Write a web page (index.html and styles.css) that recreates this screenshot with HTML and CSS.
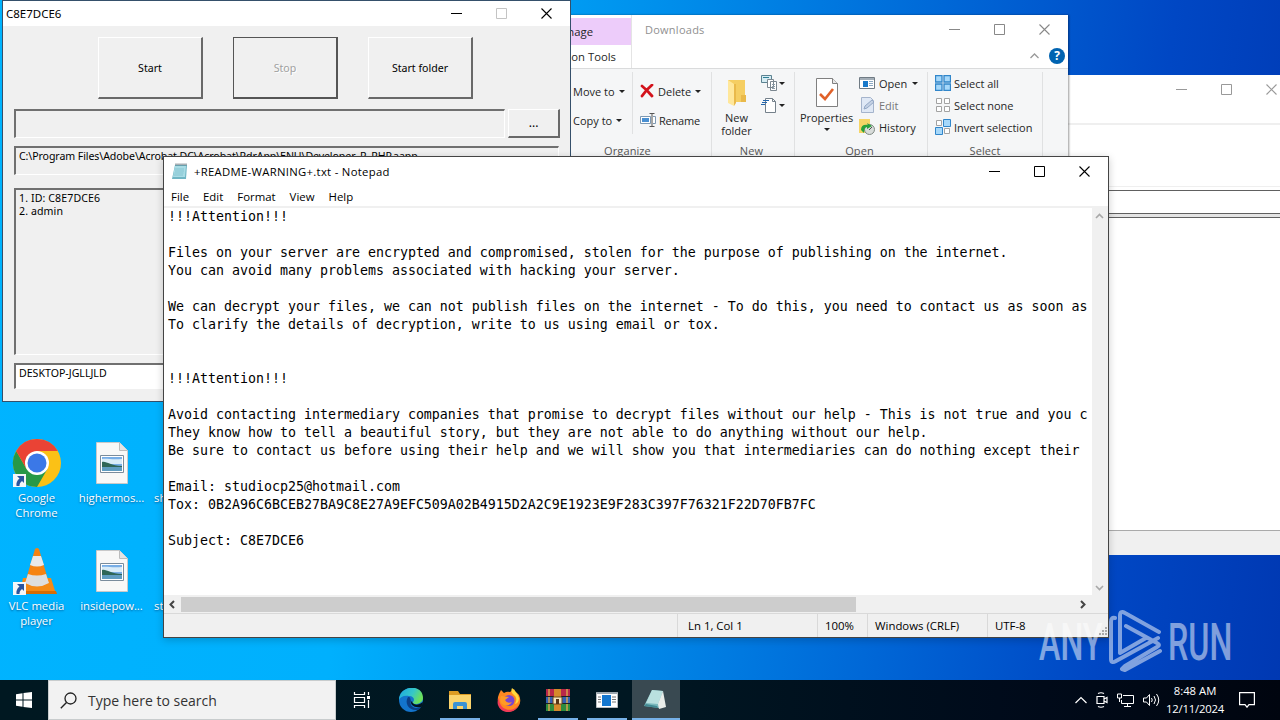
FILE: index.html
```
<!DOCTYPE html>
<html lang="en">
<head>
    <meta charset="UTF-8">
    <title>Desktop</title>
    <link rel="stylesheet" href="styles.css">
</head>
<body>
<svg class="defs" width="0" height="0">
    <symbol id="min" viewBox="0 0 11 11"><path d="M0 5.5h11" stroke="currentColor"/></symbol>
    <symbol id="max" viewBox="0 0 11 11"><path d="M.5.5h10v10H.5z" fill="none" stroke="currentColor"/></symbol>
    <symbol id="close" viewBox="0 0 11 11"><path d="M.5.5l10 10M10.500.5l-10 10" fill="none" stroke="currentColor" stroke-width="1.1"/></symbol>
    <symbol id="shortcut" viewBox="0 0 13 13"><path d="M0 0h13v13H0z" fill="#f4f6f8"/><path d="M4 2h7v7L9 7C7 8.500 6.500 10 6.500 12H3.500C3 9 4 6.500 6.500 4.500z" fill="#2b559e"/></symbol>
    <symbol id="picture" viewBox="0 0 32 42"><path d="M.5.5h23l8 8v33H.5z" fill="#f8f8f7" stroke="#c9c9c9"/><path d="M23.500.5v8h8" fill="#e4e4e4" stroke="#bcbcbc"/><path d="M4.500 13.500h23v17h-23z" fill="#fff" stroke="#7a8c9c"/><path d="M6 15h20v14H6z" fill="#78aee6"/><path d="M6 17c5-1 9 1 20 0v5H6z" fill="#d9ecf8"/><path d="M6 20c5-1 8 4 20 4v2H6z" fill="#2f6657"/><path d="M6 25h20v4H6z" fill="#5f9cc0"/></symbol>
</svg>

<div class="desktop">
    <!-- desktop icons -->
    <div class="icons">
        <div class="icon">
            <svg width="52" height="52" viewBox="0 0 52 52">
                <circle cx="26" cy="26" r="24" fill="#fbc116"/>
                <path d="M5.200 14A24 24 0 0 1 46.800 14H26z" fill="#ea4335"/>
                <path d="M5.200 14A24 24 0 0 0 26 50L36.400 32 26 38 15.600 32z" fill="#279847"/>
                <path d="M5.200 14L15.600 32 19 20 26 14z" fill="#ea4335"/>
                <circle cx="26" cy="26" r="12" fill="#fff"/><circle cx="26" cy="26" r="9.500" fill="#3b78e7"/>
                <use href="#shortcut" x="2" y="37" width="13" height="13"/>
            </svg>
            <span>Google<br>Chrome</span>
        </div>
        <div class="icon">
            <svg width="52" height="52" viewBox="0 0 52 52"><use href="#picture" x="10" y="5" width="32" height="42"/></svg>
            <span>highermos...</span>
        </div>
        <div class="icon cut"><span>sh</span></div>
        <div class="icon">
            <svg width="52" height="52" viewBox="0 0 52 52">
                <path d="M12 33h28l5 16H9z" fill="#f58a16"/><path d="M9 46h36l1 3H8z" fill="#d66c04"/>
                <path d="M24 4q2-2 4 0l10 34q-12 8-24 0z" fill="#f58312"/>
                <path d="M22 11h8l3 9q-7 3-14 0z" fill="#e9e9e9"/><path d="M17 29q9 3 18 0l3 9q-12 7-24 0z" fill="#dedede"/>
                <use href="#shortcut" x="2" y="37" width="13" height="13"/>
            </svg>
            <span>VLC media<br>player</span>
        </div>
        <div class="icon">
            <svg width="52" height="52" viewBox="0 0 52 52"><use href="#picture" x="10" y="5" width="32" height="42"/></svg>
            <span>insidepow...</span>
        </div>
        <div class="icon cut"><span>st</span></div>
    </div>

    <!-- empty window at the back -->
    <div class="window back">
        <div class="buttons"><svg><use href="#min"/></svg><svg><use href="#max"/></svg><svg><use href="#close"/></svg></div>
        <div class="back-tools"></div>
        <div class="back-field"></div>
        <div class="back-gap"></div>
        <div class="back-list"></div>
        <div class="back-status"></div>
    </div>

    <!-- file explorer -->
    <div class="window explorer">
        <div class="explorer-top">
            <div class="tabs">
                <div class="tab manage">Manage</div>
                <div class="tab tools">Application Tools</div>
            </div>
            <div class="explorer-title">Downloads</div>
            <div class="explorer-right">
                <div class="buttons"><svg><use href="#min"/></svg><svg><use href="#max"/></svg><svg><use href="#close"/></svg></div>
                <div class="help">
                    <svg width="9" height="6" viewBox="0 0 9 6"><path d="M.5 5l4-4 4 4" fill="none" stroke="#999" stroke-width="1.300"/></svg>
                    <b>?</b>
                </div>
            </div>
        </div>
        <div class="ribbon">
            <div class="group organize">
                <div class="group-body">
                    <div class="col move">
                        <div class="cmd"><span>Move to</span><i class="arrow"></i></div>
                        <div class="cmd"><span>Copy to</span><i class="arrow"></i></div>
                    </div>
                    <div class="col del">
                        <div class="cmd">
                            <svg width="14" height="14" viewBox="0 0 14 14"><path d="M2 2q5 4 10 10M12 1Q6 6 2 12" fill="none" stroke="#d3131c" stroke-width="2.800" stroke-linecap="round"/></svg>
                            <span>Delete</span><i class="arrow"></i>
                        </div>
                        <div class="cmd rename">
                            <svg width="16" height="16" viewBox="0 0 16 16"><path d="M.5 4.500h10v7H.5zM13 4.500h2.500v7H13" fill="#fff" stroke="#7d99b3"/><path d="M2 6h7v4H2z" fill="#4a90d2"/><path d="M9.500 1.500h5M12 2v12M9.500 14.500h5" stroke="#555" fill="none"/></svg>
                            <span>Rename</span>
                        </div>
                    </div>
                </div>
                <div class="group-name">Organize</div>
            </div>
            <div class="group new">
                <div class="group-body">
                    <div class="big">
                        <svg width="20" height="28" viewBox="0 0 20 28"><path d="M1 1h17v22H1z" fill="#f5ce62"/><path d="M1 1l6 4v22l-6-3z" fill="#ffe79a"/><path d="M7 5h2v19l-2 3zM14 16h5v7h-5z" fill="#e9b94a"/></svg>
                        <span>New<br>folder</span>
                    </div>
                    <div class="small">
                        <div><svg width="17" height="16" viewBox="0 0 17 16"><path d="M.5.5h10v7H.5z" fill="#d6ecf3" stroke="#5b8291"/><path d="M2 2.500h6" stroke="#2e7f94"/><path d="M6.500 4.500h6v8h-6zM9.500 6.500h6v9h-6z" fill="#fff" stroke="#7b8790"/><path d="M11 9.500h3M11 11.500h3M11 13.500h3" stroke="#8b9ba7"/></svg><i class="arrow"></i></div>
                        <div><svg width="17" height="16" viewBox="0 0 17 16"><path d="M4.500 1.500h7l3 3v11h-10z" fill="#fff" stroke="#75818b"/><path d="M11.500 1.500v3h3" fill="none" stroke="#75818b"/><path d="M2 3.500h6M1 5.500h5M0 7.500h4" stroke="#2466ad"/></svg><i class="arrow"></i></div>
                    </div>
                </div>
                <div class="group-name">New</div>
            </div>
            <div class="group open">
                <div class="group-body">
                    <div class="big props">
                        <svg width="22" height="29" viewBox="0 0 22 29"><path d="M.5.5h16l5 5v23H.5z" fill="#fff" stroke="#808080"/><path d="M16.500.5v5h5" fill="#e8e8e8" stroke="#808080"/><path d="M4 16l5 5 8-10" fill="none" stroke="#e06129" stroke-width="2.600"/></svg>
                        <span>Properties</span><i class="arrow"></i>
                    </div>
                    <div class="rows">
                        <div class="row"><svg width="16" height="14" viewBox="0 0 16 14"><path d="M.5 1.500h15v11H.5z" fill="#fff" stroke="#707b84"/><path d="M1 2h14v2H1z" fill="#a3aeb7"/><path d="M4 5h5v6H4z" fill="#1979ca"/><path d="M10 5.500h4M10 7.500h4M10 9.500h4" stroke="#8ca9c4"/></svg><span>Open</span><i class="arrow"></i></div>
                        <div class="row dim"><svg width="16" height="16" viewBox="0 0 16 16"><path d="M2.500.5h9l3 3v12h-12z" fill="#dfe8f5" stroke="#a5b4cc"/><path d="M5 12l1-3 7-6 2 2-7 6z" fill="#c4d1e4" stroke="#93a8c6"/></svg><span>Edit</span></div>
                        <div class="row"><svg width="16" height="16" viewBox="0 0 16 16"><path d="M0 0h11v14H0z" fill="#f6d566"/><circle cx="10.500" cy="10.500" r="5" fill="#d8dcda" stroke="#7f8983"/><path d="M2 11q0-6 7-5l-1-2 5 3-5 3v-2q-3 0-3 6z" fill="#29a13b"/><path d="M10 11l3-3" stroke="#555"/></svg><span>History</span></div>
                    </div>
                </div>
                <div class="group-name">Open</div>
            </div>
            <div class="group select">
                <div class="group-body">
                    <div class="rows">
                        <div class="row"><svg width="16" height="16" viewBox="0 0 16 16"><path d="M.5.5h6.500v6.500H.5zM9 .5h6.500v6.500H9zM.5 9h6.500v6.500H.5zM9 9h6.500v6.500H9z" fill="#a6d8fa" stroke="#3186ca" stroke-width="1.300"/></svg><span>Select all</span></div>
                        <div class="row"><svg width="16" height="16" viewBox="0 0 16 16"><path d="M1.500 1.500h5v5h-5zM9.500 1.500h5v5h-5zM1.500 9.500h5v5h-5zM9.500 9.500h5v5h-5z" fill="#fff" stroke="#a3a3a3"/></svg><span>Select none</span></div>
                        <div class="row"><svg width="16" height="16" viewBox="0 0 16 16"><path d="M1.500 1.500h5v5h-5zM9.500 9.500h5v5h-5z" fill="#fff" stroke="#a3a3a3"/><path d="M8.500.5h7v7h-7zM.5 8.500h7v7h-7z" fill="#a6d8fa" stroke="#3186ca"/></svg><span>Invert selection</span></div>
                    </div>
                </div>
                <div class="group-name">Select</div>
            </div>
        </div>
    </div>

    <!-- dialog -->
    <div class="window dialog">
        <div class="titlebar">
            <span>C8E7DCE6</span>
            <div class="buttons"><svg><use href="#min"/></svg><svg class="off"><use href="#max"/></svg><svg><use href="#close"/></svg></div>
        </div>
        <div class="dialog-buttons">
            <div class="btn">Start</div>
            <div class="btn stop">Stop</div>
            <div class="btn">Start folder</div>
        </div>
        <div class="browse"><div class="field"></div><div class="btn dots">...</div></div>
        <div class="field path"><span>C:\Program Files\Adobe\Acrobat DC\Acrobat\RdrApp\ENU\Developer_R_RHP.aapp</span></div>
        <div class="field list"><span>1. ID: C8E7DCE6</span><br><span>2. admin</span></div>
        <div class="field host"><span>DESKTOP-JGLLJLD</span></div>
    </div>

    <!-- notepad -->
    <div class="window notepad">
        <div class="titlebar">
            <svg class="np-icon" width="16" height="17" viewBox="0 0 16 17"><path d="M3 2h12l-1 14H0z" fill="#6fb5c4"/><path d="M3 3h11l-1 11H1z" fill="#a9dce5"/><path d="M3 6h9M3 8h9M2.500 10h9M2 12h9" stroke="#75bac8" stroke-width=".7"/><path d="M4 .5v2M6 .5v2M8 .5v2M10 .5v2M12 .5v2M14 .5v2" stroke="#53616a"/></svg>
            <span>+README-WARNING+.txt - Notepad</span>
            <div class="buttons"><svg><use href="#min"/></svg><svg><use href="#max"/></svg><svg><use href="#close"/></svg></div>
        </div>
        <div class="menu"><span>File</span><span>Edit</span><span>Format</span><span>View</span><span>Help</span></div>
        <div class="np-body">
<pre class="text">!!!Attention!!!

Files on your server are encrypted and compromised, stolen for the purpose of publishing on the internet.
You can avoid many problems associated with hacking your server.

We can decrypt your files, we can not publish files on the internet - To do this, you need to contact us as soon as
To clarify the details of decryption, write to us using email or tox.


!!!Attention!!!

Avoid contacting intermediary companies that promise to decrypt files without our help - This is not true and you c
They know how to tell a beautiful story, but they are not able to do anything without our help.
Be sure to contact us before using their help and we will show you that intermediaries can do nothing except their

Email: studiocp25@hotmail.com
Tox: 0B2A96C6BCEB27BA9C8E27A9EFC509A02B4915D2A2C9E1923E9F283C397F76321F22D70FB7FC

Subject: C8E7DCE6</pre>
            <div class="vscroll">
                <svg width="9" height="6" viewBox="0 0 9 6"><path d="M1 5l3.500-3.500L8 5" fill="none" stroke="#a8a8a8" stroke-width="1.600"/></svg>
                <svg width="9" height="6" viewBox="0 0 9 6"><path d="M1 1l3.500 3.500L8 1" fill="none" stroke="#a8a8a8" stroke-width="1.600"/></svg>
            </div>
        </div>
        <div class="hscroll">
            <svg width="6" height="9" viewBox="0 0 6 9"><path d="M5 1L1.500 4.500 5 8" fill="none" stroke="#444" stroke-width="2"/></svg>
            <div class="thumb"></div>
            <svg width="6" height="9" viewBox="0 0 6 9"><path d="M1 1l3.500 3.500L1 8" fill="none" stroke="#444" stroke-width="2"/></svg>
        </div>
        <div class="status">
            <span class="s-pos">Ln 1, Col 1</span><span class="s-zoom">100%</span><span class="s-eol">Windows (CRLF)</span><span class="s-enc">UTF-8</span>
            <svg class="grip" width="9" height="9" viewBox="0 0 9 9"><path d="M7 1h2M4 4h5M1 7h8" stroke="#aaa" stroke-width="2" stroke-dasharray="2 1"/></svg>
        </div>
    </div>

    <!-- watermark -->
    <div class="watermark">
        <span>ANY</span>
        <svg width="56" height="64" viewBox="0 0 56 64"><path d="M8 9Q4 8 4 13v37q0 5 5 2L51 29M13 44V7q0-6 5-3l34 19M19 17l31 17q4 2 0 4L18 57l-3 3 3 1 35-19M13 44l26-15" fill="none" stroke="#fff" stroke-width="4" stroke-linejoin="round" stroke-linecap="round"/></svg>
        <span class="run-text">RUN</span>
    </div>

    <!-- taskbar -->
    <div class="taskbar">
        <div class="start"><svg width="16" height="16" viewBox="0 0 16 16"><path d="M0 2.200L6.500 1.300v6.200H0zM7.500 1.100L16 0v7.500H7.500zM0 8.500h6.500v6.200L0 13.800zM7.500 8.500H16V16l-8.500-1.100z" fill="#fff"/></svg></div>
        <div class="search">
            <svg width="17" height="17" viewBox="0 0 17 17"><circle cx="10.500" cy="6.500" r="5.500" fill="none" stroke="#222" stroke-width="1.300"/><path d="M6.500 10.500L.8 16.200" stroke="#222" stroke-width="1.400"/></svg>
            <span>Type here to search</span>
        </div>
        <div class="task view"><svg width="18" height="16" viewBox="0 0 18 16"><path d="M1.500 0v2.500h10V0M1.500 5.500h10v5h-10zM1.500 16v-2.500h10V16M15.500 0v3M15.500 8v8" fill="none" stroke="#fff" stroke-width="1.200"/><path d="M14 4h3v3h-3z" fill="#fff"/></svg></div>
        <div class="task"><svg width="24" height="24" viewBox="0 0 24 24">
            <defs><linearGradient id="edge" x1="0" y1="0" x2="1" y2=".4"><stop offset="0" stop-color="#1ba7e0"/><stop offset=".6" stop-color="#35c7c9"/><stop offset="1" stop-color="#6ce05a"/></linearGradient></defs>
            <circle cx="12" cy="12" r="12" fill="#1374cc"/><path d="M0 12C0-3 24-5 24 10c0 4-4 6-8 6-2 0-3-1-2-2 2-2 1-6-4-6-5-1-9 1-10 4z" fill="url(#edge)"/><path d="M9 9c-4 6 1 14 9 13 2 0 3-1 4-3-6 3-12-1-10-6-1-2 0-4-3-4z" fill="#0b3f86"/><path d="M15 16q4 2 9-2 0 3-2 5-6 1-9-2-2-3 0-4 0 2 2 3z" fill="#03131f"/></svg></div>
        <div class="task run"><svg width="22" height="20" viewBox="0 0 22 20"><path d="M0 1h9l2 3h11v4H0z" fill="#dd9c22"/><path d="M0 5h22v14H0z" fill="#fbd46c"/><path d="M4 19v-5q0-2 2-2h10q2 0 2 2v5h-4v-3H8v3z" fill="#3b92d3"/></svg></div>
        <div class="task"><svg width="24" height="24" viewBox="0 0 24 24"><path d="M2 6l2-4 3 3q3-2 6-1l4-3q1 3 3 4l2 2q3 7-1 12c-5 6-14 6-18 0Q-1 13 2 6z" fill="#ff8820"/><path d="M15 0q-2 4 2 7t1 9q4-1 4-6Q20 4 15 0z" fill="#ffd83d"/><path d="M2 10c0 14 16 15 20 6-2 9-17 12-21 1-1-3 0-5 1-7z" fill="#f13b57"/><circle cx="12" cy="12.500" r="5.500" fill="#7847d0"/><path d="M4 8l8 1-4 3q2 4 7 2-4 6-10 2-3-3-1-8z" fill="#ff9a25"/></svg></div>
        <div class="task run"><svg width="24" height="24" viewBox="0 0 24 24"><path d="M0 1h24v7H0z" fill="#b9274a"/><path d="M0 9h24v6H0z" fill="#3261b5"/><path d="M0 16h24v7H0z" fill="#2d8c3e"/><path d="M3 1v22M21 1v22" stroke="#d7a24e" stroke-width="1.500"/><path d="M0 8.500h24M0 15.500h24" stroke="#202020"/><path d="M8 1h7v22H8z" fill="#d5892b"/><path d="M7 9h9v7H7z" fill="#f4e3b9" stroke="#6d471f"/><path d="M10 11h3v5h-3z" fill="#553315"/></svg></div>
        <div class="task run"><svg width="22" height="18" viewBox="0 0 22 18"><path d="M.5 1.500h21v15H.5z" fill="#fff" stroke="#b8bdc1"/><path d="M1 1h20v2H1z" fill="#9ca7af"/><path d="M6 4h9v11H6z" fill="#1377cf"/><path d="M2 6h3M2 8.500h3M2 11h3M16 6h4M16 8.500h4M16 11h4" stroke="#777"/></svg></div>
        <div class="task run active"><svg width="24" height="22" viewBox="0 0 24 22"><path d="M8 1l11 1-4 17L0 17z" fill="#7bb9bd"/><path d="M8 1l11 1-5 13-12-1z" fill="#b9e0df"/><path d="M19 2l3 16-7 2-1-5z" fill="#e8ece9"/><path d="M2 15l11 2 1 2-14-2z" fill="#438a93"/></svg></div>
        <div class="tray">
            <svg width="12" height="8" viewBox="0 0 12 8"><path d="M.5 7L6 1.500 11.500 7" fill="none" stroke="#fff" stroke-width="1.200"/></svg>
            <svg width="12" height="16" viewBox="0 0 12 16"><path d="M1 4.500h7v7H1zM8 7l3-1.500v5L8 9M2 1.500q3-1.500 6 0M2 14.500q3 1.500 6 0" fill="none" stroke="#fff" stroke-width="1.200"/></svg>
            <svg width="17" height="14" viewBox="0 0 17 14"><path d="M6 2.500h10.500v8H4.500V7M.5 1h4v4h-4zM2.500 5v4M10.500 10.500v3M7 13.500h7" fill="none" stroke="#fff"/></svg>
            <svg width="17" height="14" viewBox="0 0 17 14"><path d="M.5 5h3l3-3.500v11L3.500 9h-3zM8.500 5q1.500 2 0 4M11 3q3 4 0 8M13.500 1q4.500 6 0 12" fill="none" stroke="#fff"/></svg>
            <div class="clock"><span class="time">8:48 AM</span><span>12/11/2024</span></div>
            <svg class="note" width="16" height="16" viewBox="0 0 16 16"><path d="M.6.6h14.800v12H10l-2 2.600-2-2.600H.6z" fill="none" stroke="#fff" stroke-width="1.200"/></svg>
        </div>
    </div>
</div>
</body>
</html>
```
FILE: styles.css
```
body {
    margin: 0;
    font-family: "Open Sans", "Noto Sans", sans-serif;
    font-size: 11px;
    color: #000;
}

.defs {
    display: block;
}

.desktop {
    position: relative;
    width: 1280px;
    height: 720px;
    overflow: hidden;
    background: linear-gradient(97deg, #00b4ff 0%, #00b0fd 30%, #0090ec 48%, #0066d6 70%, #0047c4 86%, #0038b2 100%);
}

svg {
    display: block;
    flex: none;
}

.window {
    position: absolute;
    box-sizing: border-box;
    background: #fff;
    overflow: hidden;
    white-space: nowrap;
}

.titlebar {
    display: flex;
    align-items: center;
}

.buttons {
    display: flex;
    gap: 34px;
    margin-left: auto;
}

.buttons svg {
    width: 11px;
    height: 11px;
}

.off {
    color: #c4c4c4;
}

/* Desktop icons */
.icons {
    display: grid;
    grid-template-columns: 75px 75px 30px;
    grid-auto-rows: 108px;
    padding-top: 437px;
    width: 180px;
}

.icon {
    display: flex;
    flex-direction: column;
    align-items: center;
    width: 73px;
    color: #fff;
    font-size: 11.3px;
    line-height: 15px;
    text-align: center;
    text-shadow: 0 1px 2px rgba(0, 40, 90, 0.6);
}

.icon span {
    margin-top: 1px;
}

/* only the first letters show beside the notepad window */
.icon.cut {
    align-items: flex-start;
    box-sizing: border-box;
    width: 30px;
    padding: 52px 0 0 4px;
}

/* Window at the back */
.back {
    left: 1000px;
    top: 75px;
    width: 290px;
    height: 480px;
    display: flex;
    flex-direction: column;
}

.back .buttons {
    height: 48px;
    padding: 9px 13px 0 0;
    box-sizing: border-box;
    color: #999;
}

.back-tools {
    height: 61px;
    border-top: 2px solid #efefef;
    border-bottom: 1px solid #efefef;
}

.back-field {
    margin-top: 3px;
    height: 22px;
    border-top: 1px solid #606060;
    border-bottom: 1px solid #606060;
}

.back-gap {
    height: 3px;
    background: #e4e4e4;
}

.back-list {
    height: 312px;
    border-top: 1px solid #606060;
    border-bottom: 1px solid #aaa;
}

.back-status {
    flex: 1;
    background: #f0f0f0;
}

/* Explorer */
.explorer {
    left: 480px;
    top: 15px;
    width: 588px;
    height: 240px;
    color: #262626;
    box-shadow: 1px 0 2px rgba(0, 0, 0, 0.4);
}

.explorer-top {
    display: flex;
    height: 53px;
    border-bottom: 1px solid #dadbdc;
}

.tabs {
    width: 151px;
    padding-top: 3px;
    border-right: 1px solid #e4e4e4;
}

.tab {
    display: flex;
    align-items: center;
    justify-content: flex-end;
    height: 27px;
    font-size: 11.3px;
}

.manage {
    background: #edccfa;
    padding-right: 38px;
}

.tools {
    height: 23px;
    padding-right: 15px;
}

.explorer-title {
    padding: 7px 0 0 13px;
    color: #909090;
    letter-spacing: 0.25px;
}

.explorer-right {
    margin-left: auto;
    padding: 9px 3px 0 0;
    width: 119px;
}

.explorer .buttons {
    padding-right: 14px;
    width: 101px;
    margin-left: 3px;
    color: #888;
}

.help {
    display: flex;
    justify-content: flex-end;
    align-items: center;
    gap: 10px;
    margin-top: 13px;
}

.help b {
    width: 16px;
    height: 16px;
    border-radius: 50%;
    background: #0063b1;
    color: #fff;
    font-size: 12px;
    line-height: 16px;
    text-align: center;
}

.ribbon {
    display: flex;
    padding-top: 3px;
    height: 150px;
    background: #f5f6f7;
    box-sizing: border-box;
}

.group {
    box-sizing: border-box;
    border-right: 1px solid #e0e1e2;
    height: 140px;
}

.group-body {
    display: flex;
    height: 72px;
    box-sizing: border-box;
}

.group-name {
    text-align: center;
    line-height: 14px;
    color: #555;
    letter-spacing: 0.1px;
}

.organize {
    width: 232px;
}

.new {
    width: 83px;
}

.open {
    width: 133px;
}

.select {
    width: 115px;
}

.new .group-name,
.open .group-name {
    padding-right: 3px;
}

.col {
    display: flex;
    flex-direction: column;
    gap: 13px;
    padding-top: 11px;
    height: 62px;
    box-sizing: border-box;
}

.move {
    width: 153px;
    padding-left: 93px;
    border-right: 1px solid #e0e1e2;
}

.organize .group-name {
    padding-left: 64px;
}

.del {
    padding-left: 7px;
}

.cmd,
.row {
    display: flex;
    align-items: center;
    height: 16px;
    gap: 4px;
}

.rename {
    gap: 3px;
    letter-spacing: -0.2px;
}

.arrow {
    flex: none;
    border: 3px solid transparent;
    border-top-color: #222;
    border-bottom: 0;
}

.big {
    display: flex;
    flex-direction: column;
    align-items: center;
    width: 49px;
    padding-top: 7px;
    line-height: 13px;
    text-align: center;
}

.big span {
    margin-top: 4px;
}

.props {
    width: 63px;
    padding-top: 6px;
}

.props .arrow {
    margin-top: 4px;
}

.small div {
    display: flex;
    align-items: center;
    gap: 1px;
    height: 22px;
}

.row {
    height: 22px;
    gap: 3px;
}

.open .row {
    padding-left: 1px;
    gap: 4px;
}

.row .arrow {
    margin-left: 1px;
}

.select .rows {
    padding-left: 7px;
}

.dim {
    color: #777;
}

/* Dialog */
.dialog {
    left: 2px;
    top: 0;
    width: 569px;
    height: 402px;
    padding: 0 10px 0 11px;
    border: 1px solid #35506b;
    background: #f0f0f0;
    font-family: "Noto Sans", sans-serif;
    font-size: 10.6px;
}

.dialog .titlebar {
    height: 25px;
    margin: 0 -10px 0 -11px;
    padding: 0 18px 1px 3px;
    box-sizing: border-box;
    background: #fff;
    font-size: 11.5px;
}

.dialog-buttons {
    display: flex;
    gap: 30px;
    padding: 11px 0 0 84px;
}

.btn {
    box-sizing: border-box;
    width: 105px;
    height: 62px;
    border: 1px solid #fff;
    border-right: 2px solid #696969;
    border-bottom: 2px solid #696969;
    line-height: 60px;
    text-align: center;
}

.stop {
    border: 1px solid #555;
    border-right-width: 2px;
    border-bottom-width: 2px;
    color: #a0a0a0;
    text-shadow: 1px 1px 0 #fff;
}

.browse {
    display: flex;
    gap: 3px;
    margin-top: 10px;
}

.dots {
    width: 52px;
    height: 29px;
    line-height: 26px;
    font-size: 12px;
}

.field {
    box-sizing: border-box;
    border: 1px solid #fff;
    border-top: 2px solid #707070;
    border-left: 2px solid #707070;
    padding-left: 3px;
    margin-right: 1px;
    line-height: 13px;
}

.browse .field {
    width: 492px;
    height: 29px;
    margin-right: 0;
}

.path {
    height: 29px;
    margin-top: 8px;
    padding-top: 2px;
    letter-spacing: -0.09px;
}

.list {
    height: 167px;
    margin-top: 13px;
    padding-top: 2px;
    letter-spacing: 0.1px;
}

.host {
    height: 26px;
    margin-top: 8px;
    padding-top: 2px;
    background: #fff;
}

/* Notepad */
.notepad {
    left: 163px;
    top: 156px;
    width: 946px;
    height: 482px;
    display: flex;
    flex-direction: column;
    border: 1px solid #444;
    box-shadow: 0 2px 8px rgba(0, 0, 0, 0.2);
}

.notepad .titlebar {
    height: 29px;
    padding: 0 18px 0 8px;
    font-size: 11.3px;
    letter-spacing: 0.3px;
}

.np-icon {
    margin-right: 6px;
}

.menu {
    display: flex;
    gap: 14px;
    height: 20px;
    padding-left: 7px;
    border-bottom: 2px solid #f0f0f0;
    font-size: 11.4px;
    line-height: 21px;
}

.np-body {
    display: flex;
    height: 390px;
}

.text {
    width: 924px;
    margin: 0;
    padding-left: 4px;
    overflow: hidden;
    flex: 1;
    font-family: "DejaVu Sans Mono", monospace;
    font-size: 13.29px;
    line-height: 18px;
}

.vscroll {
    display: flex;
    flex-direction: column;
    justify-content: space-between;
    align-items: center;
    width: 16px;
    padding: 5px 1px 4px 0;
    box-sizing: border-box;
    background: #f0f0f0;
}

.hscroll {
    display: flex;
    align-items: center;
    height: 18px;
    padding: 0 22px 0 5px;
    background: #f0f0f0;
}

.thumb {
    width: 675px;
    height: 15px;
    margin: 0 auto 0 6px;
    background: #cdcdcd;
}

.status {
    display: flex;
    flex: 1;
    position: relative;
    border-top: 1px solid #d9d9d9;
    background: #f0f0f0;
    padding-left: 513px;
    line-height: 23px;
    font-size: 11.4px;
}

.status span {
    box-sizing: border-box;
    border-left: 1px solid #d9d9d9;
    padding-left: 10px;
}

.status .s-pos {
    width: 140px;
}

.status .s-zoom {
    width: 50px;
    padding-left: 7px;
}

.status .s-eol {
    width: 120px;
    padding-left: 7px;
}

.status .s-enc {
    padding-left: 7px;
}

.grip {
    position: absolute;
    right: 1px;
    bottom: 1px;
}

/* Watermark */
.watermark {
    position: absolute;
    left: 1039px;
    top: 609px;
    display: flex;
    align-items: center;
    height: 64px;
    opacity: 0.5;
    color: #fff;
    font-family: "Roboto", sans-serif;
    font-size: 52px;
    font-weight: 500;
    line-height: 64px;
}

.watermark span {
    width: 68px;
    padding-top: 4px;
    transform: scaleX(0.62);
    transform-origin: 0 50%;
}

.watermark .run-text {
    margin-left: 5px;
}

/* Taskbar */
.taskbar {
    position: absolute;
    left: 0;
    top: 680px;
    display: flex;
    width: 1280px;
    height: 40px;
    background: linear-gradient(90deg, #001821, #001722 50%, #000b1b 78%, #00050f);
}

.start {
    display: flex;
    align-items: center;
    justify-content: center;
    width: 48px;
}

.search {
    display: flex;
    align-items: center;
    box-sizing: border-box;
    width: 288px;
    padding-left: 11px;
    gap: 11px;
    border: 1px solid #c8cccd;
    background: #f2f2f2;
    color: #333;
    font-size: 14px;
}

.task {
    display: flex;
    align-items: center;
    justify-content: center;
    box-sizing: border-box;
    width: 49px;
    border: solid transparent;
    border-width: 0 4px 0 5px;
}

.task.view {
    width: 50px;
}

.task.run {
    background: linear-gradient(#76b1e8, #76b1e8) bottom / 100% 2px no-repeat padding-box;
}

.task.active {
    border: 0;
    width: 48px;
    margin-left: 1px;
    background-color: #394951;
}

.tray {
    display: flex;
    align-items: center;
    gap: 9px;
    margin-left: auto;
    padding-right: 25px;
    color: #fff;
}

.clock {
    display: flex;
    flex-direction: column;
    align-items: center;
    width: 58px;
    margin-left: -3px;
    font-size: 11.3px;
    line-height: 18px;
    white-space: nowrap;
}

.clock span {
    letter-spacing: -0.2px;
}

.clock .time {
    letter-spacing: 0;
}

.note {
    margin-left: 6px;
}
```
